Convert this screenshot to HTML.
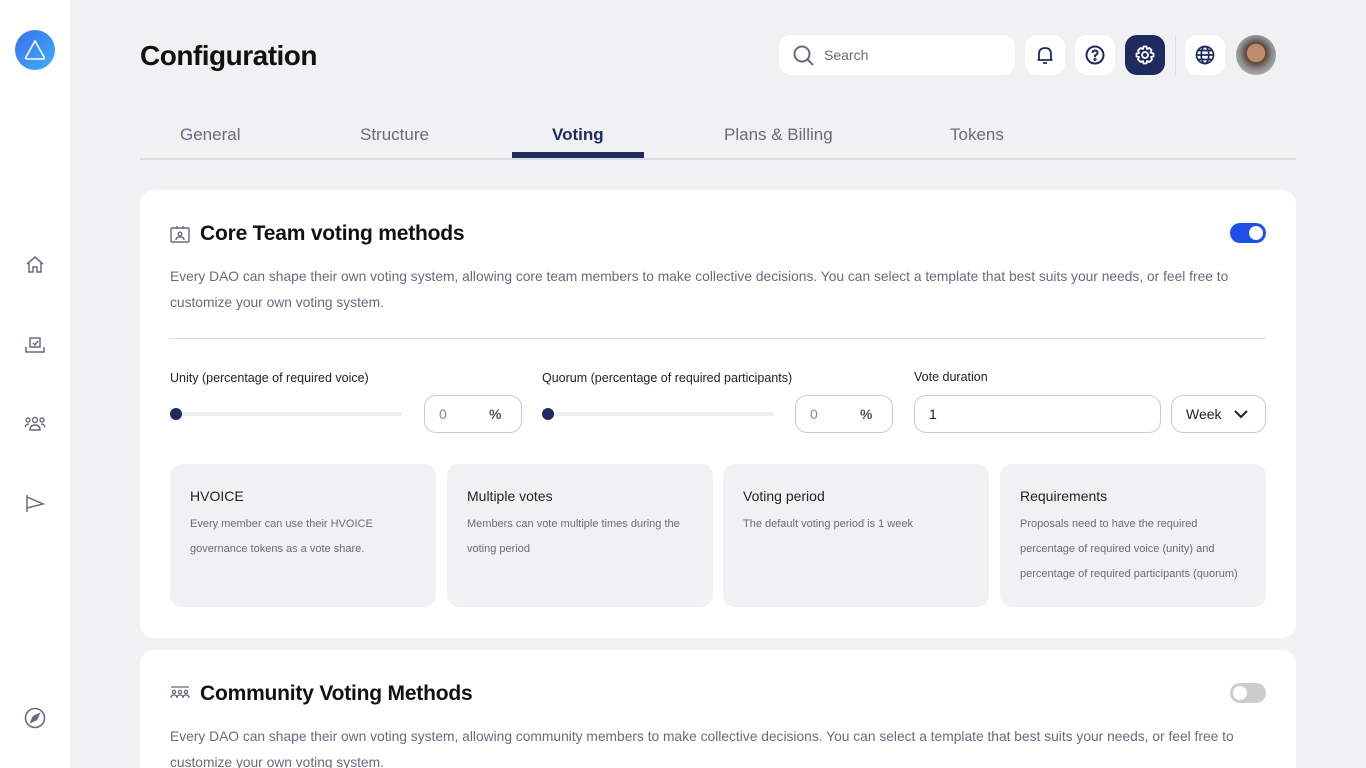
<!DOCTYPE html>
<html style="height:768px;overflow:hidden"><head><meta charset="utf-8"><style>
*{box-sizing:border-box;margin:0;padding:0}
body{width:1366px;height:768px;overflow:hidden;background:#f1f1f3;font-family:"Liberation Sans",sans-serif;position:relative;color:#111}
.side{position:absolute;left:0;top:0;width:70px;height:768px;background:#fff}
.abs{position:absolute}
.logo{left:15px;top:30px;width:40px;height:40px;border-radius:50%;background:linear-gradient(135deg,#3a6ff0,#3fb0f5)}
h1{position:absolute;left:140px;top:40px;font-size:28px;font-weight:bold;letter-spacing:-0.5px}
.search{left:779px;top:35px;width:236px;height:40px;background:#fff;border-radius:12px}
.search span{position:absolute;left:45px;top:12px;font-size:14px;color:#6b6880}
.ib{width:40px;height:40px;border-radius:12px;background:#fff;top:35px}
.ib svg{position:absolute;left:10px;top:10px}
.tabs{left:140px;top:118px;width:1156px;height:42px;border-bottom:2px solid #ddd}
.tab{position:absolute;top:7px;font-size:17px;color:#6b6880}
.card{left:140px;width:1156px;background:#fff;border-radius:14px}
.ct{position:absolute;left:60px;font-size:21px;font-weight:bold;letter-spacing:-0.2px}
.desc{position:absolute;left:30px;width:1090px;font-size:13.8px;line-height:26px;color:#6b6880}
.lbl{position:absolute;font-size:12.5px;color:#222;top:181px}
.track{position:absolute;height:4px;background:#eee;border-radius:2px;top:222px}
.dot{position:absolute;width:12px;height:12px;border-radius:50%;background:#1f2b5e;top:218px}
.inp{position:absolute;top:205px;height:38px;border:1px solid #ccc;border-radius:12px;font-size:14px;color:#888}
.box{position:absolute;top:274px;width:266px;height:143px;background:#f1f1f3;border-radius:12px;padding:24px 20px}
.box b{display:block;font-weight:normal;font-size:14px;color:#222;margin-bottom:8px}
.box p{font-size:11px;line-height:25px;color:#6b6880}
</style></head><body>
<div class="side"></div>
<div class="abs logo"><svg width="40" height="40"><path d="M20 11 L29 27 Q30 29 28 29 L12 29 Q10 29 11 27 Z" fill="none" stroke="#fff" stroke-width="1.6" stroke-linejoin="round"/></svg></div>
<svg class="abs" style="left:25px;top:255px" width="20" height="20" fill="none" stroke="#6b6880" stroke-width="1.5"><path d="M2 9 L10 2 L18 9 M4 8 V17 H8 V12 H12 V17 H16 V8"/></svg>
<svg class="abs" style="left:25px;top:335px" width="20" height="20" fill="none" stroke="#6b6880" stroke-width="1.5"><path d="M5 3 H15 V12 H5 Z M1 12 V17 H19 V12 M8 8 L10 10 L13 6"/></svg>
<svg class="abs" style="left:24px;top:414px" width="22" height="20" fill="none" stroke="#6b6880" stroke-width="1.4"><circle cx="11" cy="6" r="2.5"/><circle cx="4" cy="6" r="2"/><circle cx="18" cy="6" r="2"/><path d="M6 16 Q6 11 11 11 Q16 11 16 16 Z M1 13 Q2 10 5 10 M21 13 Q20 10 17 10"/></svg>
<svg class="abs" style="left:25px;top:494px" width="20" height="20" fill="none" stroke="#6b6880" stroke-width="1.5"><path d="M2 1 V18 M2 3 L18 10 L2 14"/></svg>
<svg class="abs" style="left:24px;top:707px" width="22" height="22" fill="none" stroke="#6b6880" stroke-width="1.6"><circle cx="11" cy="11" r="9.5"/><path d="M15 7 L12.5 12.5 L7 15 L9.5 9.5 Z" fill="#6b6880"/></svg>
<h1>Configuration</h1>
<div class="abs search"><svg class="abs" style="left:13px;top:9px" width="24" height="24" fill="none" stroke="#6b6880" stroke-width="2"><circle cx="10" cy="10" r="7.5"/><path d="M15.5 15.5 L21 21"/></svg><span>Search</span></div>
<div class="abs ib" style="left:1025px"><svg width="20" height="20" fill="none" stroke="#1f2b5e" stroke-width="1.8"><path d="M4 15 V9 Q4 3 10 3 Q16 3 16 9 V15 H17.5 H2.5 Z M8 18 H12"/></svg></div>
<div class="abs ib" style="left:1075px"><svg width="20" height="20" fill="none" stroke="#1f2b5e" stroke-width="2"><circle cx="10" cy="10" r="8.5"/><path d="M7.5 8 Q7.5 5.5 10 5.5 Q12.5 5.5 12.5 7.8 Q12.5 9.5 10 10.5 V12"/><circle cx="10" cy="14.5" r="0.6"/></svg></div>
<div class="abs ib" style="left:1125px;background:#1f2b5e"><svg width="20" height="20" fill="none" stroke="#fff" stroke-width="1.8"><circle cx="10" cy="10" r="3"/><path d="M8.5 1.5 H11.5 L12 4 L14.5 3 L16.5 5 L15.5 7.5 L18.5 8.5 V11.5 L16 12 L17 14.5 L14.5 17 L12 16 L11.5 18.5 H8.5 L8 16 L5.5 17 L3 14.5 L4 12 L1.5 11.5 V8.5 L4 8 L3 5.5 L5.5 3 L8 4 Z" stroke-linejoin="round"/></svg></div>
<div class="abs" style="left:1175px;top:35px;width:1px;height:40px;background:#ddd"></div>
<div class="abs ib" style="left:1185px"><svg width="20" height="20" fill="none" stroke="#1f2b5e" stroke-width="1.7"><circle cx="10" cy="10" r="8.5"/><ellipse cx="10" cy="10" rx="3.8" ry="8.5"/><path d="M1.5 10 H18.5 M3 5.5 H17 M3 14.5 H17"/></svg></div>
<div class="abs" style="left:1236px;top:35px;width:40px;height:40px;border-radius:50%;background:radial-gradient(circle at 50% 45%,#c08a6e 0 30%,#5a4236 32%,#8d8d8d 55%,#cfcfcf)"></div>
<div class="abs tabs">
<span class="tab" style="left:40px">General</span>
<span class="tab" style="left:220px">Structure</span>
<span class="tab" style="left:412px;color:#1f2b5e;font-weight:bold">Voting</span>
<span class="tab" style="left:584px">Plans &amp; Billing</span>
<span class="tab" style="left:810px">Tokens</span>
<div class="abs" style="left:372px;top:34px;width:132px;height:6px;background:#1f2b5e"></div>
</div>
<div class="abs card" style="top:190px;height:448px">
<svg class="abs" style="left:30px;top:35px" width="20" height="18" fill="none" stroke="#6b6880" stroke-width="1.4"><rect x="1" y="3" width="18" height="14" rx="1"/><path d="M7 1 V4 M13 1 V4"/><circle cx="10" cy="9" r="1.8"/><path d="M6 15 Q6 12 10 12 Q14 12 14 15"/></svg>
<div class="ct" style="top:32px">Core Team voting methods</div>
<div class="abs" style="left:1090px;top:33px;width:36px;height:20px;border-radius:10px;background:#1f4fe8"><div class="abs" style="right:3px;top:3px;width:14px;height:14px;border-radius:50%;background:#fff"></div></div>
<div class="desc" style="top:74px">Every DAO can shape their own voting system, allowing core team members to make collective decisions. You can select a template that best suits your needs, or feel free to customize your own voting system.</div>
<div class="abs" style="left:30px;top:148px;width:1096px;height:1px;background:#ddd"></div>
<div class="lbl" style="left:30px">Unity (percentage of required voice)</div>
<div class="track" style="left:30px;width:232px"></div><div class="dot" style="left:30px"></div>
<div class="inp" style="left:284px;width:98px"><span class="abs" style="left:14px;top:10px">0</span><span class="abs" style="left:64px;top:10px;color:#555;font-weight:bold">%</span></div>
<div class="lbl" style="left:402px">Quorum (percentage of required participants)</div>
<div class="track" style="left:402px;width:232px"></div><div class="dot" style="left:402px"></div>
<div class="inp" style="left:655px;width:98px"><span class="abs" style="left:14px;top:10px">0</span><span class="abs" style="left:64px;top:10px;color:#555;font-weight:bold">%</span></div>
<div class="lbl" style="left:774px;top:180px">Vote duration</div>
<div class="inp" style="left:774px;width:247px;color:#222"><span class="abs" style="left:14px;top:10px">1</span></div>
<div class="inp" style="left:1031px;width:95px;color:#222"><span class="abs" style="left:14px;top:10px">Week</span><svg class="abs" style="left:62px;top:12px" width="14" height="12" fill="none" stroke="#222" stroke-width="2"><path d="M1 3 L7 9 L13 3"/></svg></div>
<div class="box" style="left:30px"><b>HVOICE</b><p>Every member can use their HVOICE governance tokens as a vote share.</p></div>
<div class="box" style="left:307px"><b>Multiple votes</b><p>Members can vote multiple times during the voting period</p></div>
<div class="box" style="left:583px"><b>Voting period</b><p>The default voting period is 1 week</p></div>
<div class="box" style="left:860px"><b>Requirements</b><p>Proposals need to have the required percentage of required voice (unity) and percentage of required participants (quorum)</p></div>
</div>
<div class="abs card" style="top:650px;height:118px;border-radius:14px 14px 0 0">
<svg class="abs" style="left:30px;top:35px" width="20" height="16" fill="none" stroke="#6b6880" stroke-width="1.3"><path d="M1 2 H19"/><circle cx="4" cy="7" r="1.6"/><circle cx="10" cy="7" r="1.6"/><circle cx="16" cy="7" r="1.6"/><path d="M1 13 Q1 10 4 10 Q7 10 7 13 M7 13 Q7 10 10 10 Q13 10 13 13 M13 13 Q13 10 16 10 Q19 10 19 13"/></svg>
<div class="ct" style="top:32px">Community Voting Methods</div>
<div class="abs" style="left:1090px;top:33px;width:36px;height:20px;border-radius:10px;background:#ccc"><div class="abs" style="left:3px;top:3px;width:14px;height:14px;border-radius:50%;background:#fff"></div></div>
<div class="desc" style="top:74px">Every DAO can shape their own voting system, allowing community members to make collective decisions. You can select a template that best suits your needs, or feel free to customize your own voting system.</div>
</div>
</body></html>
